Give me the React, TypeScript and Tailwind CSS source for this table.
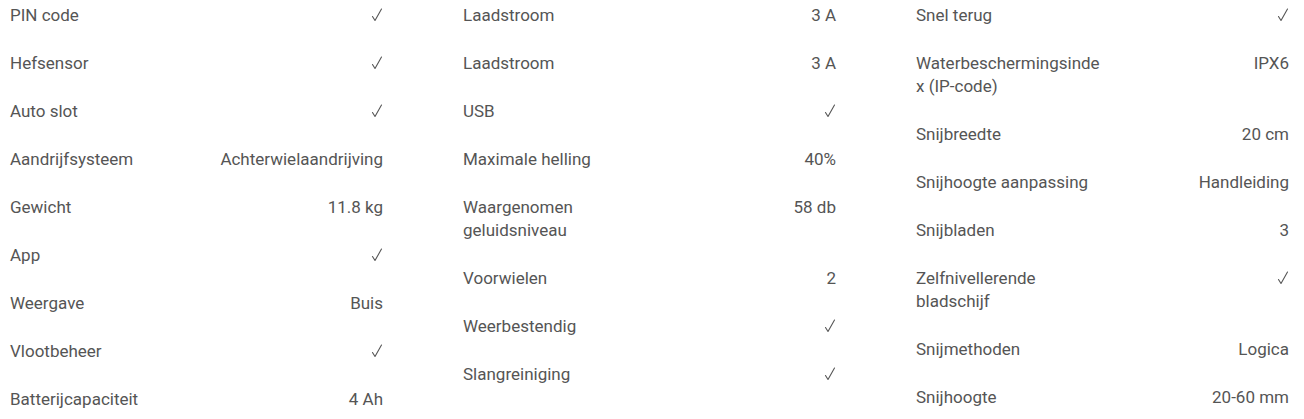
const columns: [string, string][][] = [
  [
    ["PIN code", "✓"],
    ["Hefsensor", "✓"],
    ["Auto slot", "✓"],
    ["Aandrijfsysteem", "Achterwielaandrijving"],
    ["Gewicht", "11.8 kg"],
    ["App", "✓"],
    ["Weergave", "Buis"],
    ["Vlootbeheer", "✓"],
    ["Batterijcapaciteit", "4 Ah"],
  ],
  [
    ["Laadstroom", "3 A"],
    ["Laadstroom", "3 A"],
    ["USB", "✓"],
    ["Maximale helling", "40%"],
    ["Waargenomen geluidsniveau", "58 db"],
    ["Voorwielen", "2"],
    ["Weerbestendig", "✓"],
    ["Slangreiniging", "✓"],
  ],
  [
    ["Snel terug", "✓"],
    ["Waterbeschermingsindex (IP-code)", "IPX6"],
    ["Snijbreedte", "20 cm"],
    ["Snijhoogte aanpassing", "Handleiding"],
    ["Snijbladen", "3"],
    ["Zelfnivellerende bladschijf", "✓"],
    ["Snijmethoden", "Logica"],
    ["Snijhoogte", "20-60 mm"],
  ],
];

function Check() {
  return (
    <svg width="12" height="14" viewBox="0 0 12 14" className="ml-auto mt-[4px] block" fill="none" stroke="currentColor" strokeWidth="1.1" strokeLinecap="round" strokeLinejoin="round">
      <path d="M1.5 8.5 L4 12.5 L10.5 1" />
    </svg>
  );
}

function SpecRow({ label, value }: { label: string; value: string }) {
  return (
    <div className="grid grid-cols-2 py-[12.5px]">
      <div className="break-words">{label}</div>
      <div className="h-[23px] text-right">{value === "✓" ? <Check /> : value}</div>
    </div>
  );
}

export default function App() {
  return (
    <div className="h-[419px] overflow-hidden bg-white font-['Roboto',sans-serif] text-[17px] leading-[23px] text-[#555]">
      <div className="-mt-[9px] grid grid-cols-3 gap-x-[80px] pl-[10px] pr-[15px]">
        {columns.map((rows, i) => (
          <div key={i}>
            {rows.map(([label, value], j) => (
              <SpecRow key={j} label={label} value={value} />
            ))}
          </div>
        ))}
      </div>
    </div>
  );
}
